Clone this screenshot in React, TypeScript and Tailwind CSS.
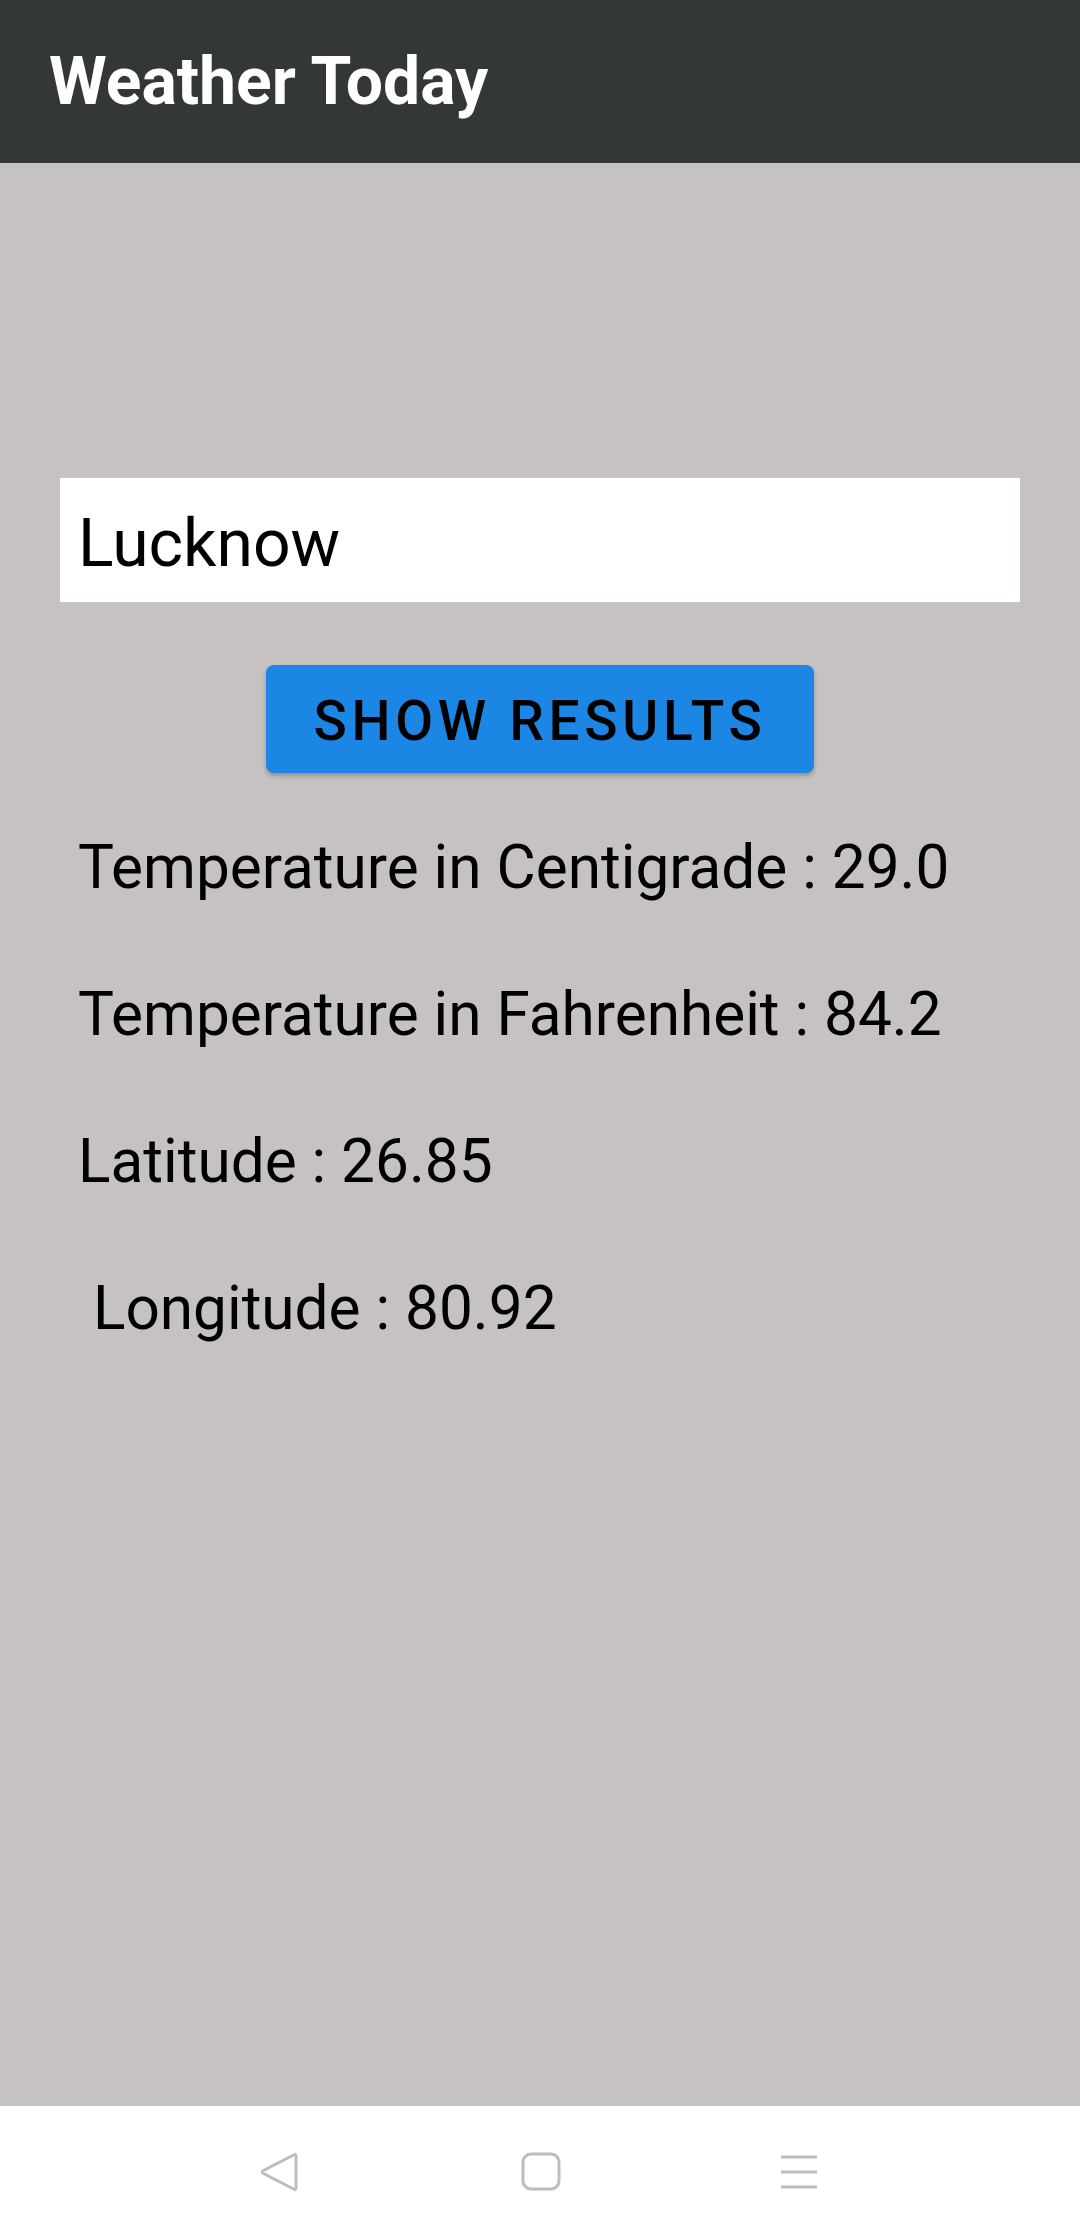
import React from "react";

const results = [
  "Temperature in Centigrade : 29.0",
  "Temperature in Fahrenheit : 84.2",
  "Latitude : 26.85",
  "\u00a0Longitude : 80.92",
];

export default function App() {
  return (
    <div className="flex h-[2238px] w-[1080px] flex-col bg-[#c6c2c2] font-['Roboto',sans-serif] text-black">
      <header className="flex h-[163px] shrink-0 items-center bg-[#343835] pl-[49px]">
        <h1 className="text-[66px] font-bold leading-[80px] text-white">Weather Today</h1>
      </header>

      <main className="flex flex-1 flex-col px-[60px] pt-[315px]">
        <div className="flex h-[124px] items-center bg-white pl-[18px] pt-[7px]">
          <span className="text-[66px] leading-[78px]">Lucknow</span>
        </div>

        <button className="mx-auto mt-[63px] flex h-[108px] w-[548px] items-center justify-center rounded-[8px] bg-[#1b86e4] pt-[4px] text-[55px] font-medium uppercase leading-[64px] tracking-[0.085em] shadow-[0_3px_4px_rgba(0,0,0,0.25)]">
          Show Results
        </button>

        <div className="mt-[59px] flex flex-col gap-[75px] pl-[18px]">
          {results.map((line, i) => (
            <p key={i} className="whitespace-pre text-[60.3px] leading-[72px]">
              {line}
            </p>
          ))}
        </div>
      </main>

      <nav className="flex h-[132px] shrink-0 items-center bg-white">
        <div className="flex w-full items-center">
          <svg className="ml-[258px]" width="44" height="44" viewBox="0 0 44 44" fill="none">
            <path
              d="M38 6.5 V37.5 Q38 40.5 35.5 39 L5.5 23.5 Q3 22 5.5 20.5 L35.5 5 Q38 3.5 38 6.5 Z"
              stroke="#bdbdbd"
              strokeWidth="3"
              strokeLinejoin="round"
            />
          </svg>
          <svg className="ml-[219px]" width="40" height="40" viewBox="0 0 40 40" fill="none">
            <rect x="2" y="2" width="36" height="35" rx="8" stroke="#bdbdbd" strokeWidth="3" />
          </svg>
          <svg className="ml-[219px]" width="38" height="36" viewBox="0 0 38 36" fill="none">
            <path d="M1 3 H37 M1 18 H37 M1 33 H37" stroke="#bdbdbd" strokeWidth="3" />
          </svg>
        </div>
      </nav>
    </div>
  );
}
